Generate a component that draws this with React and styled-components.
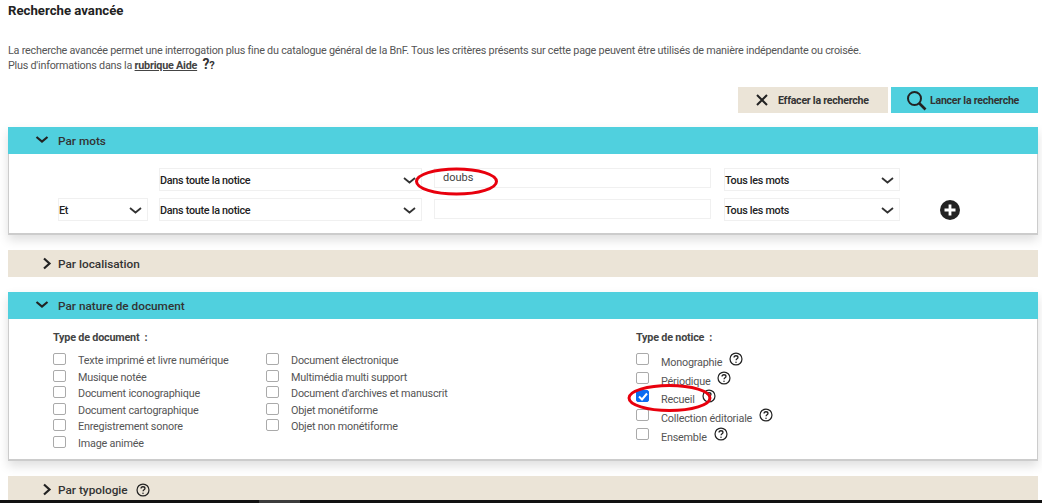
import React from 'react'
import styled, { createGlobalStyle } from 'styled-components'

const Global = createGlobalStyle`
  html, body { margin: 0; padding: 0; background: #fff; }
  body { font-family: Roboto, "Liberation Sans", sans-serif; color: #555; overflow: hidden; }
`

const Page = styled.div`
  position: relative;
  width: 1042px;
  height: 503px;
  overflow: hidden;
  display: flex;
  flex-direction: column;
  padding: 3px 4px 0 8px;
  box-sizing: border-box;
`
const Title = styled.h1`
  margin: 0;
  font-size: 13.2px;
  line-height: 16px;
  font-weight: 700;
  color: #222;
`
const Intro = styled.p`
  margin: 25px 0 0;
  font-size: 10.8px;
  line-height: 14px;
  letter-spacing: -.23px;
  color: #555;
`
const HelpLink = styled.a`
  font-weight: 700;
  color: #444;
  text-decoration: underline;
`
const Marks = styled.span`
  display: inline-block;
  margin-left: 3px;
  font-weight: 700;
  color: #333;
  font-size: 14px;
  line-height: 12px;
  small { font-size: 11px; }
`
const Actions = styled.div`
  display: flex;
  justify-content: flex-end;
  gap: 3px;
  margin-top: 14px;
`
const ActionButton = styled.button`
  width: ${p => p.$w}px;
  height: 26px;
  border: 0;
  padding: 0 0 0 ${p => p.$pad}px;
  display: flex;
  align-items: center;
  gap: ${p => p.$gap}px;
  background: ${p => (p.$primary ? '#50d0de' : '#ebe4d7')};
  color: #333;
  font-family: inherit;
  font-size: 10.6px;
  letter-spacing: -.25px;
  font-weight: 700;
`
const Panel = styled.section`
  flex: none;
  margin-top: ${p => p.$top}px;
  box-shadow: ${p => (p.$open ? '0 5px 10px rgba(0,0,0,.13)' : 'none')};
`
const PanelHead = styled.div`
  height: 27px;
  display: flex;
  align-items: center;
  gap: ${p => (p.$open ? 9 : 6)}px;
  padding-left: ${p => (p.$open ? 27 : 34)}px;
  background: ${p => (p.$open ? '#50d0de' : '#ebe4d7')};
  color: #333;
  font-size: 11.8px;
  font-weight: 500;
`
const PanelBody = styled.div`
  height: ${p => p.$h}px;
  box-sizing: border-box;
  background: #fff;
  border: 1px solid #ccc;
  border-top: 0;
  border-bottom-width: 2px;
`
const FieldGrid = styled.div`
  display: grid;
  grid-template-columns: 101px 263px 289px 189px 60px;
  row-gap: 7px;
  padding: 14px 0 0 49px;
`
const Row = styled.div`
  display: flex;
  align-items: center;
  height: 23px;
`
const SelectBox = styled.div`
  width: ${p => p.$w}px;
  height: 23px;
  box-sizing: border-box;
  margin-left: ${p => p.$left || 0}px;
  padding: 1px 5px 0 0;
  border: 1px solid #f0f0f0;
  display: flex;
  align-items: center;
  justify-content: space-between;
  font-size: 10.8px;
  letter-spacing: -.28px;
  font-weight: 500;
  color: #222;
`
const TextBox = styled.div`
  width: 277px;
  height: 20px;
  box-sizing: border-box;
  margin: ${p => (p.$raised ? '0' : '1px')} 0 0 12px;
  align-self: flex-start;
  padding-left: 8px;
  border: 1px solid #f0f0f0;
  font-size: 11px;
  line-height: 17px;
  color: #444;
`
const AddIcon = styled.svg`
  margin-left: 40px;
`
const Columns = styled.div`
  display: flex;
  padding: 12px 0 0 44px;
`
const Group = styled.div`
  width: ${p => p.$w}px;
`
const GroupTitle = styled.div`
  font-size: 10.8px;
  line-height: 13px;
  font-weight: 700;
  letter-spacing: -.2px;
  color: #444;
  margin-bottom: 9px;
`
const Lists = styled.div`
  display: flex;
`
const List = styled.div`
  width: ${p => p.$w}px;
  display: flex;
  flex-direction: column;
  gap: ${p => p.$gap}px;
`
const Check = styled.label`
  display: flex;
  align-items: flex-start;
  height: ${p => p.$h}px;
  font-size: 10.8px;
  letter-spacing: -.2px;
  color: #555;
`
const Box = styled.span`
  width: 13px;
  height: 12px;
  box-sizing: border-box;
  flex: none;
  margin-right: 12px;
  border: 1px solid #aaa;
  border-radius: 2px;
  background: ${p => (p.$on ? '#0b6cf2' : '#fff')};
  border-color: ${p => (p.$on ? '#0b6cf2' : '#aaa')};
  display: flex;
  align-items: center;
  justify-content: center;
`
const DocLabel = styled.span`
  margin-top: 1px;
  line-height: 14px;
`
const NoticeLabel = styled.span`
  margin-top: 3px;
  margin-right: 7px;
  line-height: 14px;
`
const HelpIcon = styled.svg`
  flex: none;
  margin-top: ${p => (p.$lift ? -1 : 0)}px;
  margin-left: ${p => (p.$lift ? 0 : 2)}px;
`
const Annotation = styled.svg`
  position: absolute;
  left: ${p => p.$x}px;
  top: ${p => p.$y}px;
  pointer-events: none;
`
const BottomBar = styled.div`
  position: absolute;
  left: 0;
  right: 0;
  bottom: 0;
  height: 3px;
  padding-left: 259px;
  background: #111;
`
const BarTab = styled.div`
  width: 41px;
  height: 100%;
  background: #3c3c3c;
`

const Chevron = ({ open }) =>
  open ? (
    <svg width="14" height="12" viewBox="0 0 14 12" fill="none" stroke="#222" strokeWidth="2.2">
      <path d="M1.5 2 7 6.500 12.500 2" />
    </svg>
  ) : (
    <svg width="10" height="13" viewBox="0 0 10 13" fill="none" stroke="#222" strokeWidth="2.2">
      <path d="M2 1.500 7.500 6.500 2 11.500" />
    </svg>
  )
const SmallChevron = () => (
  <svg width="13" height="7" viewBox="0 0 13 7" fill="none" stroke="#333" strokeWidth="1.8">
    <path d="M1 1l5.500 4.500L12 1" />
  </svg>
)
const Help = ({ lift }) => (
  <HelpIcon $lift={lift} width="14" height="14" viewBox="0 0 15 15" fill="none">
    <circle cx="7.500" cy="7.500" r="6.400" stroke="#222" strokeWidth="1.300" />
    <path d="M5.400 6c0-1.300 1-2 2.100-2s2.100.7 2.100 1.800c0 1.500-2 1.500-2 3" stroke="#222" strokeWidth="1.400" />
    <circle cx="7.500" cy="11" r=".8" fill="#222" />
  </HelpIcon>
)

const leftDocs = ['Texte imprimé et livre numérique', 'Musique notée', 'Document iconographique', 'Document cartographique', 'Enregistrement sonore', 'Image animée']
const midDocs = ['Document électronique', 'Multimédia multi support', "Document d'archives et manuscrit", 'Objet monétiforme', 'Objet non monétiforme']
const notices = ['Monographie', 'Périodique', 'Recueil', 'Collection éditoriale', 'Ensemble']

export default function App() {
  return (
    <Page>
      <Global />
      <Title>Recherche avancée</Title>
      <Intro>
        La recherche avancée permet une interrogation plus fine du catalogue général de la BnF. Tous les critères présents sur cette page peuvent être utilisés de manière indépendante ou croisée.
        <br />
        Plus d'informations dans la <HelpLink>rubrique Aide</HelpLink> <Marks>?<small>?</small></Marks>
      </Intro>
      <Actions>
        <ActionButton $w={150} $pad={18} $gap={10}>
          <svg width="12" height="12" viewBox="0 0 12 12" stroke="#222" strokeWidth="2"><path d="M1 1l10 10M11 1 1 11" /></svg>
          Effacer la recherche
        </ActionButton>
        <ActionButton $w={147} $pad={15} $gap={3} $primary>
          <svg width="21" height="21" viewBox="0 0 21 21" fill="none" stroke="#222" strokeWidth="2"><circle cx="8.500" cy="8.500" r="6.500" /><path d="m13 13 6.500 6.500" strokeWidth="2.600" /></svg>
          Lancer la recherche
        </ActionButton>
      </Actions>

      <Panel $top={14} $open>
        <PanelHead $open><Chevron open />Par mots</PanelHead>
        <PanelBody $h={81}>
          <FieldGrid>
            <span />
            <SelectBox $w={263}>Dans toute la notice<SmallChevron /></SelectBox>
            <Row><TextBox $raised>doubs</TextBox></Row>
            <SelectBox $w={176} $left={13}>Tous les mots<SmallChevron /></SelectBox>
            <span />
            <SelectBox $w={90}>Et<SmallChevron /></SelectBox>
            <SelectBox $w={263}>Dans toute la notice<SmallChevron /></SelectBox>
            <Row><TextBox /></Row>
            <SelectBox $w={176} $left={13}>Tous les mots<SmallChevron /></SelectBox>
            <Row>
              <AddIcon width="20" height="20" viewBox="0 0 20 20">
                <circle cx="10" cy="10" r="10" fill="#222" />
                <path d="M10 4.500v11M4.500 10h11" stroke="#fff" strokeWidth="2.800" />
              </AddIcon>
            </Row>
          </FieldGrid>
        </PanelBody>
      </Panel>

      <Panel $top={15}>
        <PanelHead><Chevron />Par localisation</PanelHead>
      </Panel>

      <Panel $top={15} $open>
        <PanelHead $open><Chevron open />Par nature de document</PanelHead>
        <PanelBody $h={142}>
          <Columns>
            <Group $w={583}>
              <GroupTitle>Type de document&nbsp; :</GroupTitle>
              <Lists>
                <List $w={213} $gap={4.5}>
                  {leftDocs.map(t => <Check key={t} $h={12}><Box /><DocLabel>{t}</DocLabel></Check>)}
                </List>
                <List $w={300} $gap={4.5}>
                  {midDocs.map(t => <Check key={t} $h={12}><Box /><DocLabel>{t}</DocLabel></Check>)}
                </List>
              </Lists>
            </Group>
            <Group $w={300}>
              <GroupTitle>Type de notice&nbsp; :</GroupTitle>
              <List $w={300} $gap={4.7}>
                {notices.map(t => (
                  <Check key={t} $h={14}>
                    <Box $on={t === 'Recueil'}>
                      {t === 'Recueil' && (
                        <svg width="10" height="9" viewBox="0 0 10 9" fill="none" stroke="#fff" strokeWidth="2"><path d="m1 4.500 3 3 5-6" /></svg>
                      )}
                    </Box>
                    <NoticeLabel>{t}</NoticeLabel>
                    <Help lift />
                  </Check>
                ))}
              </List>
            </Group>
          </Columns>
        </PanelBody>
      </Panel>

      <Panel $top={15}>
        <PanelHead><Chevron />Par typologie <Help /></PanelHead>
      </Panel>

      <Annotation $x={412} $y={166} width="90" height="32" viewBox="0 0 90 32">
        <ellipse cx="44.500" cy="15.500" rx="40" ry="12.500" fill="none" stroke="#e8000d" strokeWidth="3" />
      </Annotation>
      <Annotation $x={625} $y={381} width="90" height="34" viewBox="0 0 90 34">
        <ellipse cx="44.500" cy="17" rx="40.500" ry="12.500" fill="none" stroke="#e8000d" strokeWidth="3" />
      </Annotation>
      <BottomBar><BarTab /></BottomBar>
    </Page>
  )
}
